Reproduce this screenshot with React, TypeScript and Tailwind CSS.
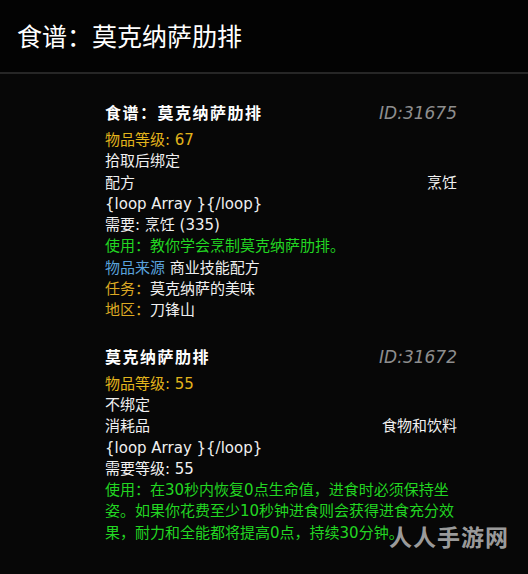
const body = '"DejaVu Sans", "Noto Sans CJK SC", sans-serif'

function Row({ left, right }: { left: React.ReactNode; right?: React.ReactNode }) {
  return (
    <div className="flex justify-between">
      <span>{left}</span>
      {right && <span>{right}</span>}
    </div>
  )
}

function ItemTitle({ name, id }: { name: string; id: string }) {
  return (
    <div className="mb-[5px] flex h-[22px] items-center justify-between">
      <span className="text-[16px] font-bold tracking-[1.5px] text-white">{name}</span>
      <span className="text-[17px] italic text-[#8e8e8e]">{id}</span>
    </div>
  )
}

export default function App() {
  return (
    <div
      className="relative h-[574px] w-[528px] overflow-hidden bg-[#070707] text-[#f0f0f0]"
      style={{ fontFamily: body }}
    >
      <header className="flex h-[74px] items-center border-b-2 border-[#262626] bg-[#030303] px-[17px] pb-[1px]">
        <h1
          className="text-[25px] font-normal text-white"
          style={{ fontFamily: '"Noto Sans CJK SC", sans-serif' }}
        >
          食谱：莫克纳萨肋排
        </h1>
      </header>

      <main className="flex w-[457px] flex-col gap-[25px] pl-[105px] pt-[29px] text-[15px] leading-[21.3px]">
        <section>
          <ItemTitle name="食谱：莫克纳萨肋排" id="ID:31675" />
          <div className="text-[#e2b41c]">物品等级: 67</div>
          <div>拾取后绑定</div>
          <Row left="配方" right="烹饪" />
          <div>{'{loop Array }{/loop}'}</div>
          <div>需要: 烹饪 (335)</div>
          <div className="text-[#22d622]">使用：教你学会烹制莫克纳萨肋排。</div>
          <div>
            <span className="text-[#5aa2dc]">物品来源</span> 商业技能配方
          </div>
          <div>
            <span className="text-[#dba823]">任务：</span>莫克纳萨的美味
          </div>
          <div>
            <span className="text-[#dba823]">地区：</span>刀锋山
          </div>
        </section>

        <section>
          <ItemTitle name="莫克纳萨肋排" id="ID:31672" />
          <div className="text-[#e2b41c]">物品等级: 55</div>
          <div>不绑定</div>
          <Row left="消耗品" right="食物和饮料" />
          <div>{'{loop Array }{/loop}'}</div>
          <div>需要等级: 55</div>
          <div className="text-[#22d622]">
            使用：在30秒内恢复0点生命值，进食时必须保持坐
            <br />
            姿。如果你花费至少10秒钟进食则会获得进食充分效
            <br />
            果，耐力和全能都将提高0点，持续30分钟。
          </div>
        </section>
      </main>

      <div
        className="absolute bottom-[21px] right-[19px] text-[23px] font-bold tracking-[1px] text-[#c4c4c4]/80"
        style={{ fontFamily: '"Noto Sans CJK SC", sans-serif' }}
      >
        人人手游网
      </div>
    </div>
  )
}
